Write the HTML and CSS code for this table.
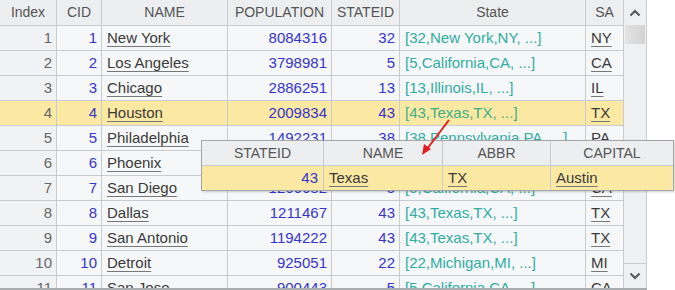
FILE: index.html
```html
<!DOCTYPE html>
<html>
<head>
<meta charset="utf-8">
<link rel="stylesheet" href="styles.css">
</head>
<body>
<div class="view">
  <div class="frame">
    <div class="table">
      <div class="c h">Index</div><div class="c h">CID</div><div class="c h">NAME</div><div class="c h">POPULATION</div><div class="c h">STATEID</div><div class="c h">State</div><div class="c h">SA</div>

      <div class="c idx">1</div><div class="c num">1</div><div class="c"><span class="link">New York</span></div><div class="c num">8084316</div><div class="c num">32</div><div class="c st">[32,New York,NY, ...]</div><div class="c"><span class="link">NY</span></div>

      <div class="c idx">2</div><div class="c num">2</div><div class="c"><span class="link">Los Angeles</span></div><div class="c num">3798981</div><div class="c num">5</div><div class="c st">[5,California,CA, ...]</div><div class="c"><span class="link">CA</span></div>

      <div class="c idx">3</div><div class="c num">3</div><div class="c"><span class="link">Chicago</span></div><div class="c num">2886251</div><div class="c num">13</div><div class="c st">[13,Illinois,IL, ...]</div><div class="c"><span class="link">IL</span></div>

      <div class="c idx hl">4</div><div class="c num hl">4</div><div class="c hl"><span class="link">Houston</span></div><div class="c num hl">2009834</div><div class="c num hl">43</div><div class="c st sthl hl">[43,Texas,TX, ...]</div><div class="c hl"><span class="link">TX</span></div>

      <div class="c idx">5</div><div class="c num">5</div><div class="c"><span class="link">Philadelphia</span></div><div class="c num">1492231</div><div class="c num">38</div><div class="c st">[38,Pennsylvania,PA, ...]</div><div class="c"><span class="link">PA</span></div>

      <div class="c idx">6</div><div class="c num">6</div><div class="c"><span class="link">Phoenix</span></div><div class="c num">1371960</div><div class="c num">3</div><div class="c st">[3,Arizona,AZ, ...]</div><div class="c"><span class="link">AZ</span></div>

      <div class="c idx">7</div><div class="c num">7</div><div class="c"><span class="link">San Diego</span></div><div class="c num">1266682</div><div class="c num">5</div><div class="c st">[5,California,CA, ...]</div><div class="c"><span class="link">CA</span></div>

      <div class="c idx">8</div><div class="c num">8</div><div class="c"><span class="link">Dallas</span></div><div class="c num">1211467</div><div class="c num">43</div><div class="c st">[43,Texas,TX, ...]</div><div class="c"><span class="link">TX</span></div>

      <div class="c idx">9</div><div class="c num">9</div><div class="c"><span class="link">San Antonio</span></div><div class="c num">1194222</div><div class="c num">43</div><div class="c st">[43,Texas,TX, ...]</div><div class="c"><span class="link">TX</span></div>

      <div class="c idx">10</div><div class="c num">10</div><div class="c"><span class="link">Detroit</span></div><div class="c num">925051</div><div class="c num">22</div><div class="c st">[22,Michigan,MI, ...]</div><div class="c"><span class="link">MI</span></div>

      <div class="c idx">11</div><div class="c num">11</div><div class="c"><span class="link">San Jose</span></div><div class="c num">900443</div><div class="c num">5</div><div class="c st">[5,California,CA, ...]</div><div class="c"><span class="link">CA</span></div>
    </div>
    <div class="scrollbar">
      <div class="sbtn">
        <svg width="12" height="8" viewBox="0 0 12 8"><polyline points="1.5,6.5 6,2 10.5,6.5" fill="none" stroke="#555" stroke-width="2"/></svg>
      </div>
      <div class="thumb"></div>
      <div class="track"></div>
      <div class="sbtn down">
        <svg width="12" height="8" viewBox="0 0 12 8"><polyline points="1.5,1.5 6,6 10.5,1.5" fill="none" stroke="#555" stroke-width="2"/></svg>
      </div>
    </div>
  </div>

  <div class="popup">
    <div class="c h">STATEID</div><div class="c h">NAME</div><div class="c h">ABBR</div><div class="c h">CAPITAL</div>
    <div class="c num hl">43</div><div class="c hl"><span class="link">Texas</span></div><div class="c hl"><span class="link">TX</span></div><div class="c hl"><span class="link">Austin</span></div>
  </div>

  <svg class="arrow" width="40" height="50" viewBox="0 0 40 50">
    <line x1="35" y1="3" x2="13" y2="32" stroke="#e01e1e" stroke-width="2"/>
    <polygon points="8,38 10,27 17,32" fill="#e01e1e"/>
  </svg>
</div>
</body>
</html>
```

FILE: styles.css
```css
html, body {
  margin: 0;
  background: #ffffff;
}

body {
  font-family: "Liberation Sans", Arial, sans-serif;
}

.view {
  position: relative;
  width: 675px;
  height: 290px;
  overflow: hidden;
}

.frame {
  display: flex;
  width: 647px;
  height: 290px;
  box-sizing: border-box;
  border-bottom: 2px solid #a9acaf;
  overflow: hidden;
}

.table {
  display: grid;
  grid-template-columns: 56px 44px 125px 103px 67px 185px 37px;
  grid-template-rows: 25px;
  grid-auto-rows: 24px;
  gap: 1px;
  background: #c9ccce;
  width: 623px;
  flex: none;
  align-content: start;
  padding-bottom: 1px;
}

.c {
  background: #f6f7f8;
  color: #3a3a3a;
  font-size: 15px;
  line-height: 24px;
  padding: 0 4px 0 5px;
  white-space: nowrap;
  overflow: hidden;
}

.h {
  background: #eceef0;
  color: #555;
  font-size: 14px;
  line-height: 25px;
  text-align: center;
  padding: 0;
}

.idx {
  background: #f1f2f3;
  color: #666;
  text-align: right;
}

.num {
  color: #3434cc;
  text-align: right;
}

.st {
  color: #2fada3;
}

.sthl {
  color: #3daf88;
}

.link {
  text-decoration: underline;
  text-decoration-color: #777;
  text-decoration-thickness: 1px;
  text-underline-offset: 3px;
  padding-right: 2px;
}

.hl {
  background: #fbe8a2;
}

.scrollbar {
  width: 24px;
  flex: none;
  box-sizing: border-box;
  border-left: 1px solid #c9ccce;
  border-right: 1px solid #c9ccce;
  background: #eff0f1;
  display: flex;
  flex-direction: column;
}

.sbtn {
  height: 25px;
  flex: none;
  display: flex;
  align-items: center;
  justify-content: center;
  background: #eff0f1;
}

.sbtn.down {
  border-top: 1px solid #c9ccce;
  height: 24px;
}

.thumb {
  height: 19px;
  flex: none;
  margin: 0 1px;
  background: linear-gradient(to right, #e3e3e3, #d3d3d3);
}

.track {
  flex: 1;
}

.popup {
  position: absolute;
  left: 201px;
  top: 140px;
  display: grid;
  grid-template-columns: 121px 118px 107px 122px;
  grid-template-rows: 24px 24px;
  gap: 1px;
  background: #c9ccce;
  border: 1px solid #a3a6a9;
  box-shadow: 1px 1px 2px rgba(0, 0, 0, 0.18);
}

.popup .h {
  line-height: 24px;
}

.popup .c {
  padding: 0 5px 0 5px;
}

.arrow {
  position: absolute;
  left: 414px;
  top: 117px;
}
```
